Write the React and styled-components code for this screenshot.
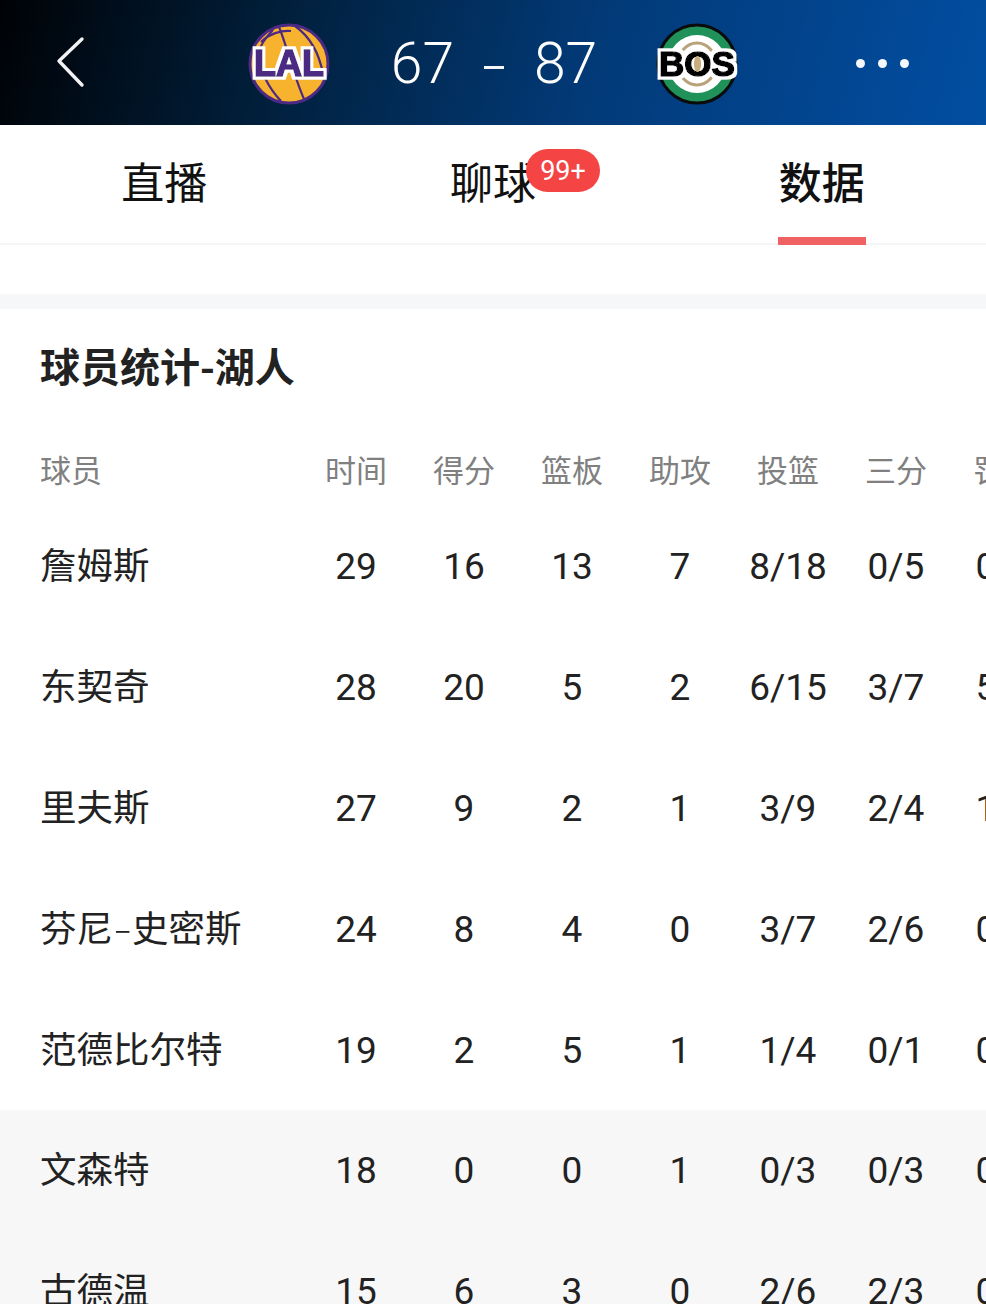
import styled, { createGlobalStyle } from 'styled-components';

const rows = [
    { name: ['詹姆斯'], stats: ['29', '16', '13', '7', '8/18', '0/5', '0/0'] },
    { name: ['东契奇'], stats: ['28', '20', '5', '2', '6/15', '3/7', '5/5'] },
    { name: ['里夫斯'], stats: ['27', '9', '2', '1', '3/9', '2/4', '1/2'] },
    { name: ['芬尼', '史密斯'], stats: ['24', '8', '4', '0', '3/7', '2/6', '0/0'] },
    { name: ['范德比尔特'], stats: ['19', '2', '5', '1', '1/4', '0/1', '0/0'] },
    { name: ['文森特'], stats: ['18', '0', '0', '1', '0/3', '0/3', '0/0'], shaded: true },
    { name: ['古德温'], stats: ['15', '6', '3', '0', '2/6', '2/3', '0/0'], shaded: true },
];

const columns = ['时间', '得分', '篮板', '助攻', '投篮', '三分', '罚球'];

function Outline({ id }) {
    return (
        <defs>
            <filter id={id} x="-10%" y="-30%" width="120%" height="160%">
                <feMorphology in="SourceAlpha" operator="dilate" radius="2.6" result="fat" />
                <feFlood floodColor="#fff" />
                <feComposite in2="fat" operator="in" result="edge" />
                <feMerge>
                    <feMergeNode in="edge" />
                    <feMergeNode in="SourceGraphic" />
                </feMerge>
            </filter>
        </defs>
    );
}

function LalLogo() {
    return (
        <svg width="84" height="84" viewBox="0 0 84 84">
            <Outline id="lal-edge" />
            <circle cx="42" cy="42" r="39" fill="#f8b32e" stroke="#4c2a84" strokeWidth="3" />
            <g fill="none" stroke="#4c2a84" strokeWidth="2.2">
                <path d="M26 8C18 16 13 24 11 32" />
                <path d="M32 5C40 24 46 52 57 77" />
                <path d="M48 4C62 14 72 30 76 52" />
                <path d="M14 20C22 12 34 8 44 9" />
                <path d="M18 56C22 64 27 72 34 79" />
            </g>
            <LogoText x="42" y="54" fontSize="36" $fill="#4c2a84" filter="url(#lal-edge)">LAL</LogoText>
        </svg>
    );
}

function BosLogo() {
    return (
        <svg width="84" height="84" viewBox="0 0 84 84">
            <Outline id="bos-edge" />
            <circle cx="42" cy="42" r="39" fill="#1f9159" stroke="#0b0b0b" strokeWidth="3" />
            <circle cx="42" cy="42" r="29" fill="#fff" />
            <ellipse cx="42" cy="42" rx="19" ry="21" fill="none" stroke="#b9a27a" strokeWidth="3" />
            <LogoText x="42" y="54" fontSize="35" $fill="#050505" filter="url(#bos-edge)">BOS</LogoText>
            <ellipse cx="42.5" cy="42" rx="3.6" ry="8" fill="#c9ae7c" />
        </svg>
    );
}

export default function App() {
    return (
        <>
            <GlobalStyle />
            <Page>
                <TopBar>
                    <BackButton>
                        <svg width="30" height="52" viewBox="0 0 30 52">
                            <path d="M26 3L3 25L26 49" fill="none" stroke="#f2f2f2" strokeWidth="3.4" strokeLinecap="round" strokeLinejoin="round" />
                        </svg>
                    </BackButton>
                    <LalLogo />
                    <Score>
                        <span>67</span>
                        <ScoreDash />
                        <span>87</span>
                    </Score>
                    <BosLogo />
                    <MoreButton>
                        <Dot />
                        <Dot />
                        <Dot />
                    </MoreButton>
                </TopBar>

                <Tabs>
                    <Tab>直播</Tab>
                    <Tab>
                        <TabLabel>
                            聊球
                            <Badge>99+</Badge>
                        </TabLabel>
                    </Tab>
                    <Tab $active>
                        数据
                        <TabLine />
                    </Tab>
                </Tabs>

                <Spacer />

                <Section>
                    <SectionTitle>球员统计-湖人</SectionTitle>
                    <HeadRow>
                        <HeadCell $left>球员</HeadCell>
                        {columns.map((c) => (
                            <HeadCell key={c}>{c}</HeadCell>
                        ))}
                    </HeadRow>
                    {rows.map((p) => (
                        <PlayerRow key={p.name[0]} $shaded={p.shaded}>
                            <PlayerName>
                                {p.name[0]}
                                {p.name[1] && <NameDash>-</NameDash>}
                                {p.name[1]}
                            </PlayerName>
                            {p.stats.map((s, i) => (
                                <StatCell key={i}>{s}</StatCell>
                            ))}
                        </PlayerRow>
                    ))}
                </Section>
            </Page>
        </>
    );
}

const GlobalStyle = createGlobalStyle`
    html, body {
        margin: 0;
        padding: 0;
        background: #fff;
    }

    body {
        font-family: 'Roboto', 'Noto Sans CJK SC', sans-serif;
    }
`;

const Page = styled.div`
    width: 986px;
    height: 1304px;
    overflow: hidden;
    background: #fff;
`;

const TopBar = styled.div`
    display: flex;
    align-items: center;
    box-sizing: border-box;
    height: 125px;
    padding: 3px 0 0 56px;
    background: linear-gradient(105deg, #000205 0%, #01213f 30%, #023a78 60%, #024ea2 100%);
`;

const BackButton = styled.div`
    display: flex;
    width: 191px;
    margin-top: -5px;
`;

const LogoText = styled.text`
    font-family: 'Liberation Sans', sans-serif;
    font-weight: 700;
    text-anchor: middle;
    fill: ${(p) => p.$fill};
    stroke: ${(p) => p.$fill};
    stroke-width: 1.6px;
`;

const Score = styled.div`
    display: flex;
    align-items: center;
    justify-content: center;
    gap: 30px;
    box-sizing: border-box;
    width: 324px;
    margin-top: -2px;
    padding-left: 2px;
    font-family: 'Roboto', sans-serif;
    font-size: 57px;
    font-weight: 300;
    color: #fff;
`;

const ScoreDash = styled.div`
    width: 20px;
    height: 3px;
    margin-top: 9px;
    background: #f4f6f8;
`;

const MoreButton = styled.div`
    display: flex;
    gap: 13px;
    margin-left: 117px;
    margin-top: -2px;
`;

const Dot = styled.div`
    width: 9px;
    height: 9px;
    border-radius: 50%;
    background: #f5f7fa;
`;

const Tabs = styled.div`
    display: flex;
    height: 120px;
    box-sizing: border-box;
    border-bottom: 2px solid #f5f5f5;
`;

const Tab = styled.div`
    position: relative;
    flex: 1;
    display: flex;
    align-items: center;
    justify-content: center;
    padding-bottom: 8px;
    font-family: 'Noto Sans CJK SC', sans-serif;
    font-size: 43px;
    font-weight: ${(p) => (p.$active ? 500 : 400)};
    color: #111;
`;

const TabLabel = styled.span`
    position: relative;
`;

const Badge = styled.span`
    position: absolute;
    left: 76px;
    top: 0;
    display: flex;
    align-items: center;
    justify-content: center;
    width: 74px;
    height: 43px;
    border-radius: 22px;
    background: #f44444;
    font-family: 'Roboto', sans-serif;
    font-size: 27px;
    font-weight: 400;
    color: #fff;
`;

const TabLine = styled.div`
    position: absolute;
    left: 50%;
    bottom: -2px;
    width: 88px;
    height: 8px;
    margin-left: -44px;
    background: #f06262;
`;

const Spacer = styled.div`
    height: 49px;
    border-bottom: 15px solid #f6f7f8;
`;

const Section = styled.div`
    display: flex;
    flex-direction: column;
`;

const SectionTitle = styled.div`
    padding: 31px 0 0 40px;
    height: 85px;
    line-height: 50px;
    font-family: 'Noto Sans CJK SC', sans-serif;
    font-size: 40px;
    font-weight: 700;
    color: #222;
`;

const HeadRow = styled.div`
    display: grid;
    grid-template-columns: 262px repeat(7, 108px);
    align-items: center;
    height: 74px;
    margin-top: 7px;
    padding-left: 40px;
    padding-bottom: 2px;
    box-sizing: border-box;
`;

const HeadCell = styled.div`
    font-family: 'Noto Sans CJK SC', sans-serif;
    font-size: 31px;
    color: #808080;
    text-align: ${(p) => (p.$left ? 'left' : 'center')};
`;

const PlayerRow = styled.div`
    display: grid;
    grid-template-columns: 262px repeat(7, 108px);
    align-items: center;
    height: 120.8px;
    padding-left: 40px;
    background: ${(p) => (p.$shaded ? '#f7f7f7' : '#fff')};
`;

const PlayerName = styled.div`
    padding-bottom: 5px;
    font-family: 'Noto Sans CJK SC', sans-serif;
    font-size: 36.5px;
    color: #222;
`;

const NameDash = styled.span`
    display: inline-block;
    width: 19px;
    font-weight: 300;
    text-align: center;
    transform: scaleX(1.5);
`;

const StatCell = styled.div`
    padding-top: 1px;
    font-family: 'Roboto', sans-serif;
    font-size: 37px;
    color: #222;
    text-align: center;
`;
